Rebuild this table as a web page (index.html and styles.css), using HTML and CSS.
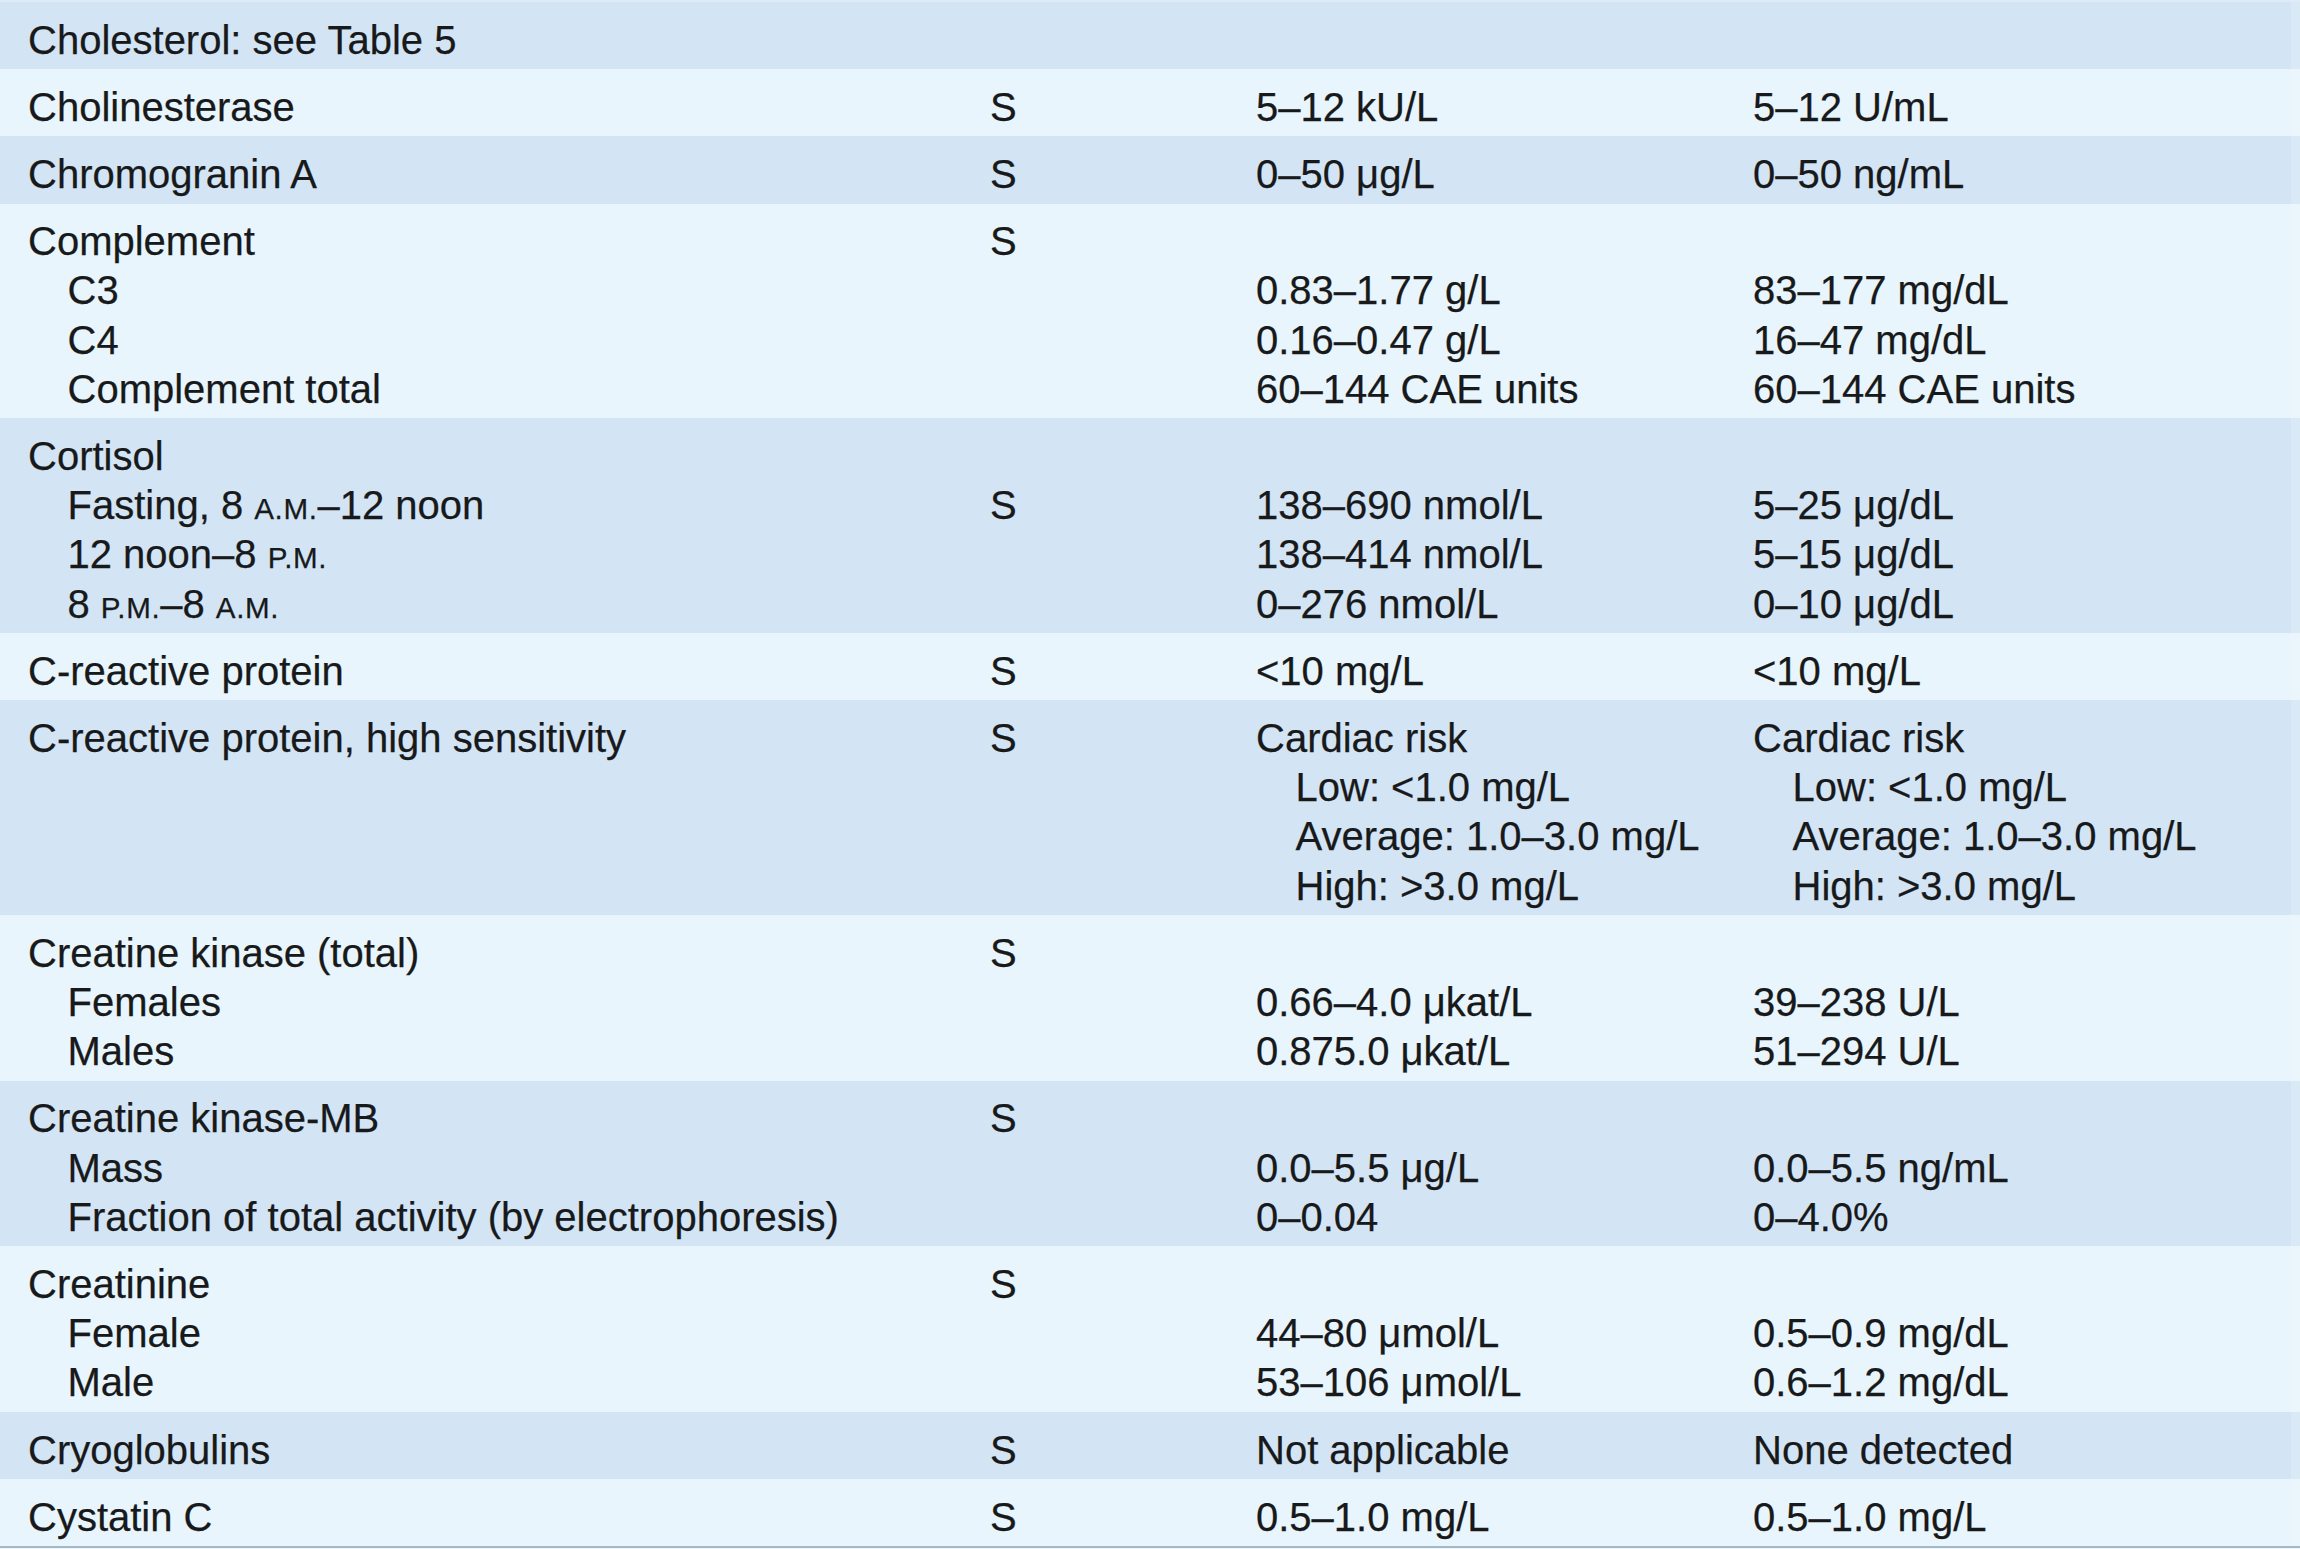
FILE: index.html
```html
<!DOCTYPE html>
<html lang="en">
<head>
<meta charset="utf-8">
<title>Reference values</title>
<link rel="stylesheet" href="styles.css">
</head>
<body>
<div class="table">
  <div class="row dark">
    <div class="cell name"><div class="line">Cholesterol: see Table 5</div></div>
    <div class="cell spec"></div>
    <div class="cell si"></div>
    <div class="cell conv"></div>
  </div>
  <div class="row light">
    <div class="cell name"><div class="line">Cholinesterase</div></div>
    <div class="cell spec"><div class="line">S</div></div>
    <div class="cell si"><div class="line">5–12 kU/L</div></div>
    <div class="cell conv"><div class="line">5–12 U/mL</div></div>
  </div>
  <div class="row dark">
    <div class="cell name"><div class="line">Chromogranin A</div></div>
    <div class="cell spec"><div class="line">S</div></div>
    <div class="cell si"><div class="line">0–50 μg/L</div></div>
    <div class="cell conv"><div class="line">0–50 ng/mL</div></div>
  </div>
  <div class="row light">
    <div class="cell name">
      <div class="line">Complement</div>
      <div class="line sub">C3</div>
      <div class="line sub">C4</div>
      <div class="line sub">Complement total</div>
    </div>
    <div class="cell spec"><div class="line">S</div></div>
    <div class="cell si">
      <div class="line"></div>
      <div class="line">0.83–1.77 g/L</div>
      <div class="line">0.16–0.47 g/L</div>
      <div class="line">60–144 CAE units</div>
    </div>
    <div class="cell conv">
      <div class="line"></div>
      <div class="line">83–177 mg/dL</div>
      <div class="line">16–47 mg/dL</div>
      <div class="line">60–144 CAE units</div>
    </div>
  </div>
  <div class="row dark">
    <div class="cell name">
      <div class="line">Cortisol</div>
      <div class="line sub">Fasting, 8 <span class="sc">a.m.</span>–12 noon</div>
      <div class="line sub">12 noon–8 <span class="sc">p.m.</span></div>
      <div class="line sub">8 <span class="sc">p.m.</span>–8 <span class="sc">a.m.</span></div>
    </div>
    <div class="cell spec">
      <div class="line"></div>
      <div class="line">S</div>
    </div>
    <div class="cell si">
      <div class="line"></div>
      <div class="line">138–690 nmol/L</div>
      <div class="line">138–414 nmol/L</div>
      <div class="line">0–276 nmol/L</div>
    </div>
    <div class="cell conv">
      <div class="line"></div>
      <div class="line">5–25 μg/dL</div>
      <div class="line">5–15 μg/dL</div>
      <div class="line">0–10 μg/dL</div>
    </div>
  </div>
  <div class="row light">
    <div class="cell name"><div class="line">C-reactive protein</div></div>
    <div class="cell spec"><div class="line">S</div></div>
    <div class="cell si"><div class="line">&lt;10 mg/L</div></div>
    <div class="cell conv"><div class="line">&lt;10 mg/L</div></div>
  </div>
  <div class="row dark">
    <div class="cell name"><div class="line">C-reactive protein, high sensitivity</div></div>
    <div class="cell spec"><div class="line">S</div></div>
    <div class="cell si">
      <div class="line">Cardiac risk</div>
      <div class="line sub">Low: &lt;1.0 mg/L</div>
      <div class="line sub">Average: 1.0–3.0 mg/L</div>
      <div class="line sub">High: &gt;3.0 mg/L</div>
    </div>
    <div class="cell conv">
      <div class="line">Cardiac risk</div>
      <div class="line sub">Low: &lt;1.0 mg/L</div>
      <div class="line sub">Average: 1.0–3.0 mg/L</div>
      <div class="line sub">High: &gt;3.0 mg/L</div>
    </div>
  </div>
  <div class="row light">
    <div class="cell name">
      <div class="line">Creatine kinase (total)</div>
      <div class="line sub">Females</div>
      <div class="line sub">Males</div>
    </div>
    <div class="cell spec"><div class="line">S</div></div>
    <div class="cell si">
      <div class="line"></div>
      <div class="line">0.66–4.0 μkat/L</div>
      <div class="line">0.875.0 μkat/L</div>
    </div>
    <div class="cell conv">
      <div class="line"></div>
      <div class="line">39–238 U/L</div>
      <div class="line">51–294 U/L</div>
    </div>
  </div>
  <div class="row dark">
    <div class="cell name">
      <div class="line">Creatine kinase-MB</div>
      <div class="line sub">Mass</div>
      <div class="line sub">Fraction of total activity (by electrophoresis)</div>
    </div>
    <div class="cell spec"><div class="line">S</div></div>
    <div class="cell si">
      <div class="line"></div>
      <div class="line">0.0–5.5 μg/L</div>
      <div class="line">0–0.04</div>
    </div>
    <div class="cell conv">
      <div class="line"></div>
      <div class="line">0.0–5.5 ng/mL</div>
      <div class="line">0–4.0%</div>
    </div>
  </div>
  <div class="row light">
    <div class="cell name">
      <div class="line">Creatinine</div>
      <div class="line sub">Female</div>
      <div class="line sub">Male</div>
    </div>
    <div class="cell spec"><div class="line">S</div></div>
    <div class="cell si">
      <div class="line"></div>
      <div class="line">44–80 μmol/L</div>
      <div class="line">53–106 μmol/L</div>
    </div>
    <div class="cell conv">
      <div class="line"></div>
      <div class="line">0.5–0.9 mg/dL</div>
      <div class="line">0.6–1.2 mg/dL</div>
    </div>
  </div>
  <div class="row dark">
    <div class="cell name"><div class="line">Cryoglobulins</div></div>
    <div class="cell spec"><div class="line">S</div></div>
    <div class="cell si"><div class="line">Not applicable</div></div>
    <div class="cell conv"><div class="line">None detected</div></div>
  </div>
  <div class="row light">
    <div class="cell name"><div class="line">Cystatin C</div></div>
    <div class="cell spec"><div class="line">S</div></div>
    <div class="cell si"><div class="line">0.5–1.0 mg/L</div></div>
    <div class="cell conv"><div class="line">0.5–1.0 mg/L</div></div>
  </div>
</div>
</body>
</html>
```
FILE: styles.css
```css
html, body {
  margin: 0;
  padding: 0;
  background: #e8f5fc;
}
body {
  font-family: "Liberation Sans", Arial, Helvetica, sans-serif;
  font-size: 40px;
  color: #18191b;
  -webkit-text-stroke: 0.25px #18191b;
}
.table {
  position: relative;
  width: 2300px;
  border-top: 2px solid #dfebf6;
  border-bottom: 2px solid #a6b8c3;
}
.table::after {
  content: "";
  position: absolute;
  top: 0;
  bottom: 0;
  right: 0;
  width: 9px;
  background: rgba(240, 248, 252, 0.25);
  pointer-events: none;
}
.row {
  display: grid;
  grid-template-columns: 962px 266px 497px 1fr;
  padding: 13.6px 0 4.45px 28px;
}
.row.dark {
  background: #d3e5f5;
}
.row.light {
  background: #e8f5fc;
}
.line {
  line-height: 49.2px;
  height: 49.2px;
  white-space: nowrap;
}
.line.sub {
  padding-left: 39.5px;
}
.sc {
  text-transform: uppercase;
  font-size: 0.74em;
  letter-spacing: 0.02em;
  line-height: 0;
}
```
